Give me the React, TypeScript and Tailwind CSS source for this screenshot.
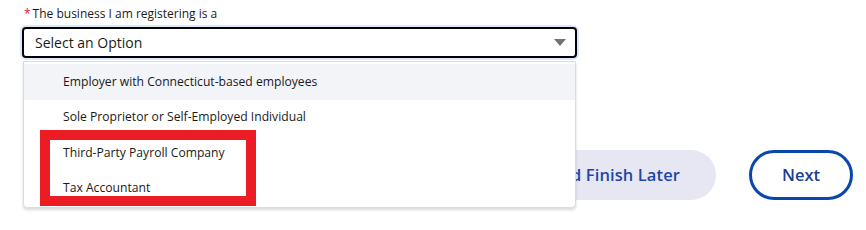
const options = [
  'Employer with Connecticut-based employees',
  'Sole Proprietor or Self-Employed Individual',
  'Third-Party Payroll Company',
  'Tax Accountant',
];

export default function App() {
  return (
    <div
      className="relative w-[866px] h-[230px] bg-white overflow-hidden text-[#1a1a1a]"
      style={{ fontFamily: '"Open Sans", "Noto Sans", sans-serif' }}
    >
      <div className="pl-[22px] pt-[5px] w-[577px]">
        <label className="flex items-center h-[18px] pl-[2px] text-[12px] leading-none">
          <span className="text-[#d4213d] mr-[2px]">*</span>
          <span>The business I am registering is a</span>
        </label>
        <div className="mt-[4px] h-[31px] flex items-center justify-between rounded-[4px] border-2 border-black px-[11px] shadow-[0_0_0_2px_#dbe8fb]">
          <span className="text-[14px]">Select an Option</span>
          <span className="w-0 h-0 border-l-[6px] border-r-[6px] border-t-[7px] border-l-transparent border-r-transparent border-t-[#737373] mr-[-2px]" />
        </div>
      </div>

      <div className="flex justify-end items-center gap-[33px] pr-[13px] mt-[92px]">
        <button className="h-[50px] px-[36px] rounded-full bg-[#e7e7f3] text-[#1d46a6] text-[16.5px] font-semibold tracking-[0.1px]">
          Save and Finish Later
        </button>
        <button className="h-[50px] w-[104px] rounded-full border-[3px] border-[#0a47ad] text-[#1d3f93] text-[16.5px] font-semibold">
          Next
        </button>
      </div>

      <ul className="absolute left-[23px] top-[61px] w-[553px] bg-white border border-[#dcdcdc] rounded-b-[4px] shadow-[0_2px_3px_rgba(0,0,0,0.15)] pt-[2px] pb-[1px]">
        {options.map((o, i) => (
          <li
            key={o}
            className={`h-[35.5px] flex items-center pl-[39px] text-[12.15px] ${i === 0 ? 'bg-[#f2f4f8]' : ''}`}
          >
            {o}
          </li>
        ))}
      </ul>

      <div className="absolute left-[40px] top-[130px] w-[216px] h-[76px] border-[10px] border-[#ec1c24]" />
    </div>
  );
}
